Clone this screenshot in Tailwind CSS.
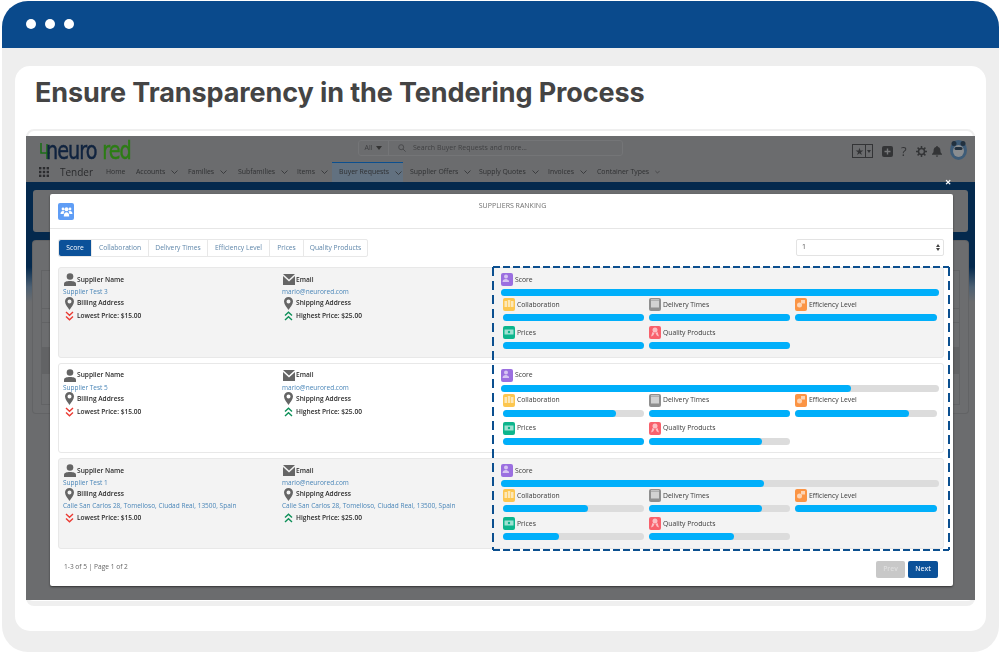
<!DOCTYPE html>
<html lang="en">
<head>
    <meta charset="UTF-8">
    <meta name="viewport" content="width=device-width, initial-scale=1.0">
    <title>Ensure Transparency in the Tendering Process</title>
    <script src="https://cdn.jsdelivr.net/npm/@tailwindcss/browser@4"></script>
</head>
<body class="w-[999px] h-[652px] overflow-hidden bg-white font-['Open_Sans',sans-serif]">
    <div class="ml-[2px] mt-[1px] h-[651px] flex flex-col rounded-[26px] overflow-hidden bg-[#eeeeee]">
        <!-- window bar -->
        <div class="h-[47px] shrink-0 bg-[#0a4a8c] flex items-center gap-[9px] pl-[24px] pb-[1px]">
            <span class="w-[10px] h-[10px] rounded-full bg-white"></span>
            <span class="w-[10px] h-[10px] rounded-full bg-white"></span>
            <span class="w-[10px] h-[10px] rounded-full bg-white"></span>
        </div>
        <div class="flex-1 px-[13px] pt-[18px]">
            <div class="h-[565px] rounded-[15px] bg-white pt-[9px] px-[11px]">
                <h1 class="ml-[9px] h-[38px] leading-[36px] text-[27px] font-bold text-[#444444] font-['Inter',sans-serif] tracking-[-0.1px] whitespace-nowrap">Ensure Transparency in the Tendering Process</h1>
                <!-- app screenshot -->
                <div class="mt-[16px] h-[477px] rounded-[8px] border-2 border-[#efefef] border-b-[5px] pt-[5px] relative">
                    <div id="shot" class="relative h-[464px] -mx-[2px] bg-[#6b6c6e] flex flex-col overflow-hidden blur-[0.35px]">
                        <div class="h-[26px] shrink-0 relative flex items-center pl-[13px]">
                            <div class="relative w-[110px] h-[24px] mt-[3px]">
                                <svg class="absolute left-0 top-[3px]" width="13" height="18" viewBox="0 0 13 18" fill="none" stroke="#1c6e18" stroke-width="1.600"><path d="M2 1v10h9M8 2v15"/></svg>
                                <div class="absolute left-[7px] top-0 flex items-baseline scale-x-[0.8] origin-left text-[24px] leading-[24px] font-['DejaVu_Sans',sans-serif] tracking-[-1.2px] [-webkit-text-stroke:0.5px]">
                                    <span class="text-[#10233f]">neuro</span>
                                    <span class="ml-[7px] text-[#2c7d14]">red</span>
                                </div>
                            </div>
                            <div class="absolute left-[332px] top-[4px] w-[265px] h-[16px] rounded-[3px] border border-[#747577] flex items-center text-[7px] text-[#3d3e40]">
                                <span class="w-[30px] h-full border-r border-[#747577] flex items-center justify-center gap-[4px]">All <i class="w-0 h-0 border-x-[3px] border-x-transparent border-t-[4px] border-t-[#333333]"></i></span>
                                <svg class="ml-[9px]" width="8" height="8" viewBox="0 0 8 8" fill="none" stroke="#4a4b4d"><circle cx="3.2" cy="3.2" r="2.5"/><path d="M5 5l2.6 2.6"/></svg>
                                <span class="ml-[7px] text-[#404143]">Search Buyer Requests and more...</span>
                            </div>
                            <div class="absolute left-[826px] top-[6px] flex items-center text-[#333436]">
                                <span class="w-[14px] h-[14px] border border-[#333436] flex items-center justify-center text-[10px] leading-none">★</span>
                                <span class="w-[7px] h-[14px] border border-l-0 border-[#333436] flex items-center justify-center"><i class="w-0 h-0 border-x-[2px] border-x-transparent border-t-[3px] border-t-[#333436]"></i></span>
                                <svg class="ml-[9px]" width="11" height="11" viewBox="0 0 11 11"><rect width="11" height="11" rx="2" fill="#333436"/><path d="M5.5 2.5v6M2.5 5.5h6" stroke="#77787a" stroke-width="1.4"/></svg>
                                <span class="ml-[8px] w-[8px] text-[13px] leading-none">?</span>
                                <svg class="ml-[7px]" width="11" height="11" viewBox="0 0 11 11" fill="none" stroke="#333436" stroke-width="1.5"><circle cx="5.5" cy="5.5" r="3"/><path d="M5.5 0v2M5.5 9v2M0 5.5h2M9 5.5h2M1.6 1.6l1.4 1.4M8 8l1.4 1.4M9.4 1.6L8 3M3 8L1.6 9.4"/></svg>
                                <svg class="ml-[5px]" width="10" height="11" viewBox="0 0 10 11" fill="#333436"><path d="M5 0a1 1 0 0 1 1 1c2 .5 2.4 2 2.4 3.6 0 2 .6 2.600 1.600 3.400v.8H0V8c1-.8 1.600-1.400 1.600-3.400C1.600 3 2 1.500 4 1a1 1 0 0 1 1-1zM3.800 9.500h2.400a1.200 1.200 0 0 1-2.400 0z"/></svg>
                                <svg class="ml-[8px] -mt-[2px]" width="17" height="20" viewBox="0 0 17 20"><ellipse cx="8.500" cy="10" rx="8.500" ry="10" fill="#3e5c78"/><ellipse cx="8.500" cy="11" rx="5.500" ry="6" fill="#8a8d90"/><circle cx="4" cy="3.500" r="2.500" fill="#22313f"/><circle cx="13" cy="3.500" r="2.500" fill="#22313f"/><rect x="4.500" y="7" width="8" height="3" rx="1.500" fill="#22313f"/></svg>
                            </div>
                        </div>
                        <!-- app nav -->
                        <div class="h-[20px] shrink-0 flex items-center pl-[13px] text-[6.900px] text-[#2f3032]">
                            <svg width="10" height="10" viewBox="0 0 10 10" fill="#2b2c2e"><rect width="2.400" height="2.400"/><rect x="3.800" width="2.400" height="2.400"/><rect x="7.600" width="2.400" height="2.400"/><rect y="3.800" width="2.400" height="2.400"/><rect x="3.800" y="3.800" width="2.400" height="2.400"/><rect x="7.600" y="3.800" width="2.400" height="2.400"/><rect y="7.600" width="2.400" height="2.400"/><rect x="3.800" y="7.600" width="2.400" height="2.400"/><rect x="7.600" y="7.600" width="2.400" height="2.400"/></svg>
                            <span class="ml-[11px] w-[39px] text-[10px] text-[#2a2b2d]">Tender</span>
                            <div id="nav" class="flex items-center h-full"></div>
                        </div>
                        <!-- page behind the modal -->
                        <div class="flex-1 bg-[linear-gradient(to_bottom,#04294d_0px,#04294d_85px,#4d6072_105px,#6b6c6e_120px)] px-[7px] pt-[8px]">
                            <div class="h-[42px] rounded-[3px] bg-[#6c6d6f]"></div>
                            <div class="mt-[9px] h-[172px] rounded-[3px] bg-[#6c6d6f] shadow-[0_0_0_1px_#626365] px-[8px] pt-[29px]">
                                <div class="h-[135px] border border-[#626365] flex flex-col">
                                    <div class="h-[38px] border-b border-[#626365]"></div>
                                    <div class="h-[14px] border-b border-[#626365]"></div>
                                    <div class="h-[25px] border-b border-[#626365]"></div>
                                    <div class="h-[25px] bg-[#626365]"></div>
                                    <div class="h-[25px] border-t border-[#626365]"></div>
                                </div>
                            </div>
                        </div>
                        <!-- dim edge, modal -->
                        <span class="absolute left-[919px] top-[40px] text-[11px] leading-none font-bold text-white">×</span>
                        <div class="absolute left-[24px] top-[58px] w-[903px] h-[392px] bg-white rounded-[2px] shadow-[0_1px_2px_#333333] flex flex-col">
                            <div class="h-[35px] shrink-0 border-b border-[#e6e6e6] relative pl-[8px] pt-[9px]">
                                <span class="flex w-[16px] h-[17px] rounded-[2px] bg-[#5f9df5] items-center justify-center">
                                    <svg width="13" height="11" viewBox="0 0 13 11" fill="#ffffff"><circle cx="3" cy="3" r="1.400"/><circle cx="10" cy="3" r="1.400"/><path d="M.5 8c0-2 1-3 2.500-3 .7 0 1.200.2 1.600.6C4 6.200 3.700 7 3.600 8zM12.500 8c0-2-1-3-2.500-3-.7 0-1.200.2-1.600.6.600.6.900 1.400 1 2.400z"/><circle cx="6.500" cy="3.200" r="2"/><path d="M3.800 10.500c0-2.900 1-4.200 2.700-4.200s2.700 1.300 2.700 4.200z"/></svg>
                                </span>
                                <span class="absolute left-0 right-[-22px] top-[7px] text-center text-[7px] leading-[10px] text-[#6f6f6f]">SUPPLIERS RANKING</span>
                            </div>
                            <div class="h-[38px] shrink-0 pl-[8px] pr-[9px] pt-[10px] flex justify-between items-start">
                                <div id="tabs" class="flex h-[18px] rounded-[2px] border border-[#e8e8e8] text-[6.700px] text-[#5e86aa]"></div>
                                <div class="w-[148px] h-[17px] rounded-[2px] border border-[#e3e3e3] flex items-center justify-between pl-[5px] pr-[3px] text-[7px] text-[#555555]">
                                    1
                                    <span class="flex flex-col gap-[1px]"><i class="w-0 h-0 border-x-[2px] border-x-transparent border-b-[3px] border-b-[#444444]"></i><i class="w-0 h-0 border-x-[2px] border-x-transparent border-t-[3px] border-t-[#444444]"></i></span>
                                </div>
                            </div>
                            <div id="rows" class="mx-[8px] mr-[9px] flex flex-col gap-[5px]"></div>
                            <div class="mt-[12px] pl-[14px] pr-[15px] flex items-start justify-between">
                                <span class="mt-[1px] text-[6.600px] leading-[10px] text-[#666666]">1-3 of 5 | Page 1 of 2</span>
                                <div class="flex gap-[3px]">
                                    <span class="w-[29px] h-[17px] rounded-[2px] bg-[#c8c8c8] flex items-center justify-center text-[6.800px] font-semibold text-[#dedede]">Prev</span>
                                    <span class="w-[30px] h-[17px] rounded-[2px] bg-[#0b5199] flex items-center justify-center text-[6.800px] font-semibold text-[#dfe9f5]">Next</span>
                                </div>
                            </div>
                        </div>
                        <!-- highlight around the scores -->
                        <svg class="absolute left-[466px] top-[130px]" width="458" height="285" fill="none" stroke="#0b4f8f" stroke-width="2">
                            <path d="M1 1H457" stroke-dasharray="7 3"/>
                            <path d="M1 284H457" stroke-dasharray="7 3"/>
                            <path d="M1 1V284" stroke-dasharray="9 5"/>
                            <path d="M457 1V284" stroke-dasharray="9 5"/>
                        </svg>
                    </div>
                </div>
            </div>
        </div>
    </div>

    <script>
        const chevron = '<svg class="ml-[6px]" width="7" height="4" viewBox="0 0 7 4" fill="none" stroke="#2f3032" stroke-width=".8"><path d="M.5.5l3 3 3-3"/></svg>';
        const navItems = [
            ['Home', 30, false], ['Accounts', 52, true], ['Families', 50, true], ['Subfamilies', 59, true], ['Items', 42, true],
            ['Buyer Requests', 71, true], ['Supplier Offers', 69, true], ['Supply Quotes', 69, true], ['Invoices', 49, true], ['Container Types', 70, true]
        ];
        document.getElementById('nav').innerHTML = navItems.map(([label, width, hasMenu]) => {
            const active = label === 'Buyer Requests';
            return `<div class="h-full flex items-center pl-[7px] ${active ? 'bg-[#627180] border-t border-[#0b4f8f]' : ''}" style="width:${width}px"><span class="whitespace-nowrap">${label}</span>${hasMenu ? chevron : ''}</div>`;
        }).join('');

        const tabNames = [['Score', 32], ['Collaboration', 57], ['Delivery Times', 59], ['Efficiency Level', 62], ['Prices', 34], ['Quality Products', 64]];
        document.getElementById('tabs').innerHTML = tabNames.map(([label, width], i) =>
            `<span class="flex items-center justify-center ${i === 0 ? 'bg-[#0b5199] text-white rounded-l-[2px]' : 'border-l border-[#e8e8e8]'}" style="width:${width}px">${label}</span>`
        ).join('');

        const icons = {
            person: '<svg width="12" height="13" viewBox="0 0 12 13" fill="#656565"><circle cx="6" cy="3.500" r="3.300"/><path d="M0 13v-2c0-2.200 2.500-3 6-3s6 .8 6 3v2z"/></svg>',
            mail: '<svg width="12" height="11" viewBox="0 0 12 11" fill="#656565"><path d="M0 0h12L6 5.500z"/><path d="M0 2l6 5.500L12 2v9H0z"/></svg>',
            pin: '<svg width="9" height="13" viewBox="0 0 9 13"><path fill-rule="evenodd" fill="#656565" d="M4.500 0a4.500 4.500 0 0 1 4.500 4.500c0 3-3 6-4.500 8.500C3 10.500 0 7.500 0 4.500A4.500 4.500 0 0 1 4.500 0zm0 2.500a2 2 0 1 0 0 4 2 2 0 0 0 0-4z"/></svg>',
            down: '<svg width="9" height="10" viewBox="0 0 9 10" fill="none" stroke="#ea3a32" stroke-width="1.400"><path d="M1 1l3.500 3.200L8 1M1 5.500l3.500 3.200L8 5.500"/></svg>',
            up: '<svg width="9" height="10" viewBox="0 0 9 10" fill="none" stroke="#0e8f58" stroke-width="1.400"><path d="M1 4.500l3.500-3.200L8 4.500M1 9l3.500-3.200L8 9"/></svg>'
        };
        const tiles = {
            Score: ['#9b6fe0', '<circle cx="5" cy="3.500" r="2"/><path d="M1.500 9c0-2 1.500-3 3.500-3s1.500 1.500 3 1.500V9z"/>'],
            Collaboration: ['#fcc64f', '<rect x="1.500" y="3" width="2.500" height="6"/><rect x="4.800" y="2" width="2.500" height="7"/><rect x="8" y="3" width="2.500" height="6"/>'],
            'Delivery Times': ['#8f8f8f', '<path d="M2 2.500h8v7H2zM2 1h8v.8H2z"/>'],
            'Efficiency Level': ['#fb9444', '<circle cx="4.500" cy="7" r="2.500"/><path d="M6 2h4v3.500H6z"/>'],
            Prices: ['#0db58d', '<path fill-rule="evenodd" d="M1.500 3.500h9v5h-9zM6 4.800a1.200 1.200 0 1 0 0 2.400 1.200 1.200 0 0 0 0-2.400z"/>'],
            'Quality Products': ['#f8616c', '<circle cx="6" cy="4" r="2.500"/><path d="M3.500 6l-1.500 4.500 2.200-1L5.500 7zM8.500 6l1.500 4.500-2.200-1L6.500 7z"/>']
        };
        function tile(name) {
            return `<svg class="shrink-0" width="12" height="13" viewBox="0 0 12 13"><rect width="12" height="13" rx="2" fill="${tiles[name][0]}"/><g fill="#ffffff" opacity=".6">${tiles[name][1]}</g></svg>`;
        }
        function bar(pct, extra) {
            return `<div class="h-[7px] rounded-full bg-[#dcdcdc] ${extra}"><div class="h-full rounded-full bg-[#00affa]" style="width:${pct}%"></div></div>`;
        }
        function infoColumn(nameLabel, nameIcon, link, addrLabel, addr, priceIcon, price) {
            return `<div class="w-[219px] shrink-0 pt-[5px]">
                <div class="h-[13px] flex items-center"><span class="w-[14px] pl-[1px]">${nameIcon}</span><b class="text-[6.600px] font-semibold text-[#2b2b2b]">${nameLabel}</b></div>
                <div class="h-[12px] leading-[12px] text-[#4a86b8]">${link}</div>
                <div class="h-[10px] flex items-center"><span class="w-[14px] pl-[2px]">${icons.pin}</span><b class="text-[6.600px] font-semibold text-[#2b2b2b]">${addrLabel}</b></div>
                ${addr ? `<div class="h-[12px] leading-[14px] text-[#4a86b8] whitespace-nowrap">${addr}</div>` : ''}
                <div class="h-[14px] flex items-center ${addr ? '' : 'mt-[1px]'}"><span class="w-[14px] pl-[2px]">${priceIcon}</span><b class="text-[6.600px] font-semibold text-[#2b2b2b]">${price}</b></div>
            </div>`;
        }
        const suppliers = [
            { name: 'Supplier Test 3', addr: '', shade: true, score: 100, parts: [100, 100, 100, 100, 100] },
            { name: 'Supplier Test 5', addr: '', shade: false, score: 80, parts: [80, 100, 80, 100, 80] },
            { name: 'Supplier Test 1', addr: 'Calle San Carlos 28, Tomelloso, Ciudad Real, 13500, Spain', shade: true, score: 60, parts: [60, 80, 100, 40, 60] }
        ];
        const metricNames = ['Collaboration', 'Delivery Times', 'Efficiency Level', 'Prices', 'Quality Products'];
        document.getElementById('rows').innerHTML = suppliers.map(s => `
            <div class="h-[90.500px] rounded-[3px] border border-[#e8e8e8] ${s.shade ? 'bg-[#f3f3f3]' : 'bg-white'} pl-[4px] flex text-[6.500px] leading-[10px]">
                ${infoColumn('Supplier Name', icons.person, s.name, 'Billing Address', s.addr, icons.down, 'Lowest Price: $15.00')}
                ${infoColumn('Email', icons.mail, 'mario@neurored.com', 'Shipping Address', s.addr, icons.up, 'Highest Price: $25.00')}
                <div class="flex-1 pr-[4px] pt-[5px] text-[6.800px] text-[#3a3a3a] font-medium">
                    <div class="h-[13px] flex items-center gap-[2px]">${tile('Score')}<span>Score</span></div>
                    ${bar(s.score, 'mt-[3px]')}
                    <div class="mt-[2px] ml-[2px] grid grid-cols-[141px_141px_142px] gap-x-[5px] gap-y-[5px]">
                        ${metricNames.map((m, i) => `<div class="h-[23px]"><div class="h-[13px] flex items-center gap-[2px]">${tile(m)}<span>${m}</span></div>${bar(s.parts[i], 'mt-[3px]')}</div>`).join('')}
                    </div>
                </div>
            </div>`).join('');
    </script>
</body>
</html>
